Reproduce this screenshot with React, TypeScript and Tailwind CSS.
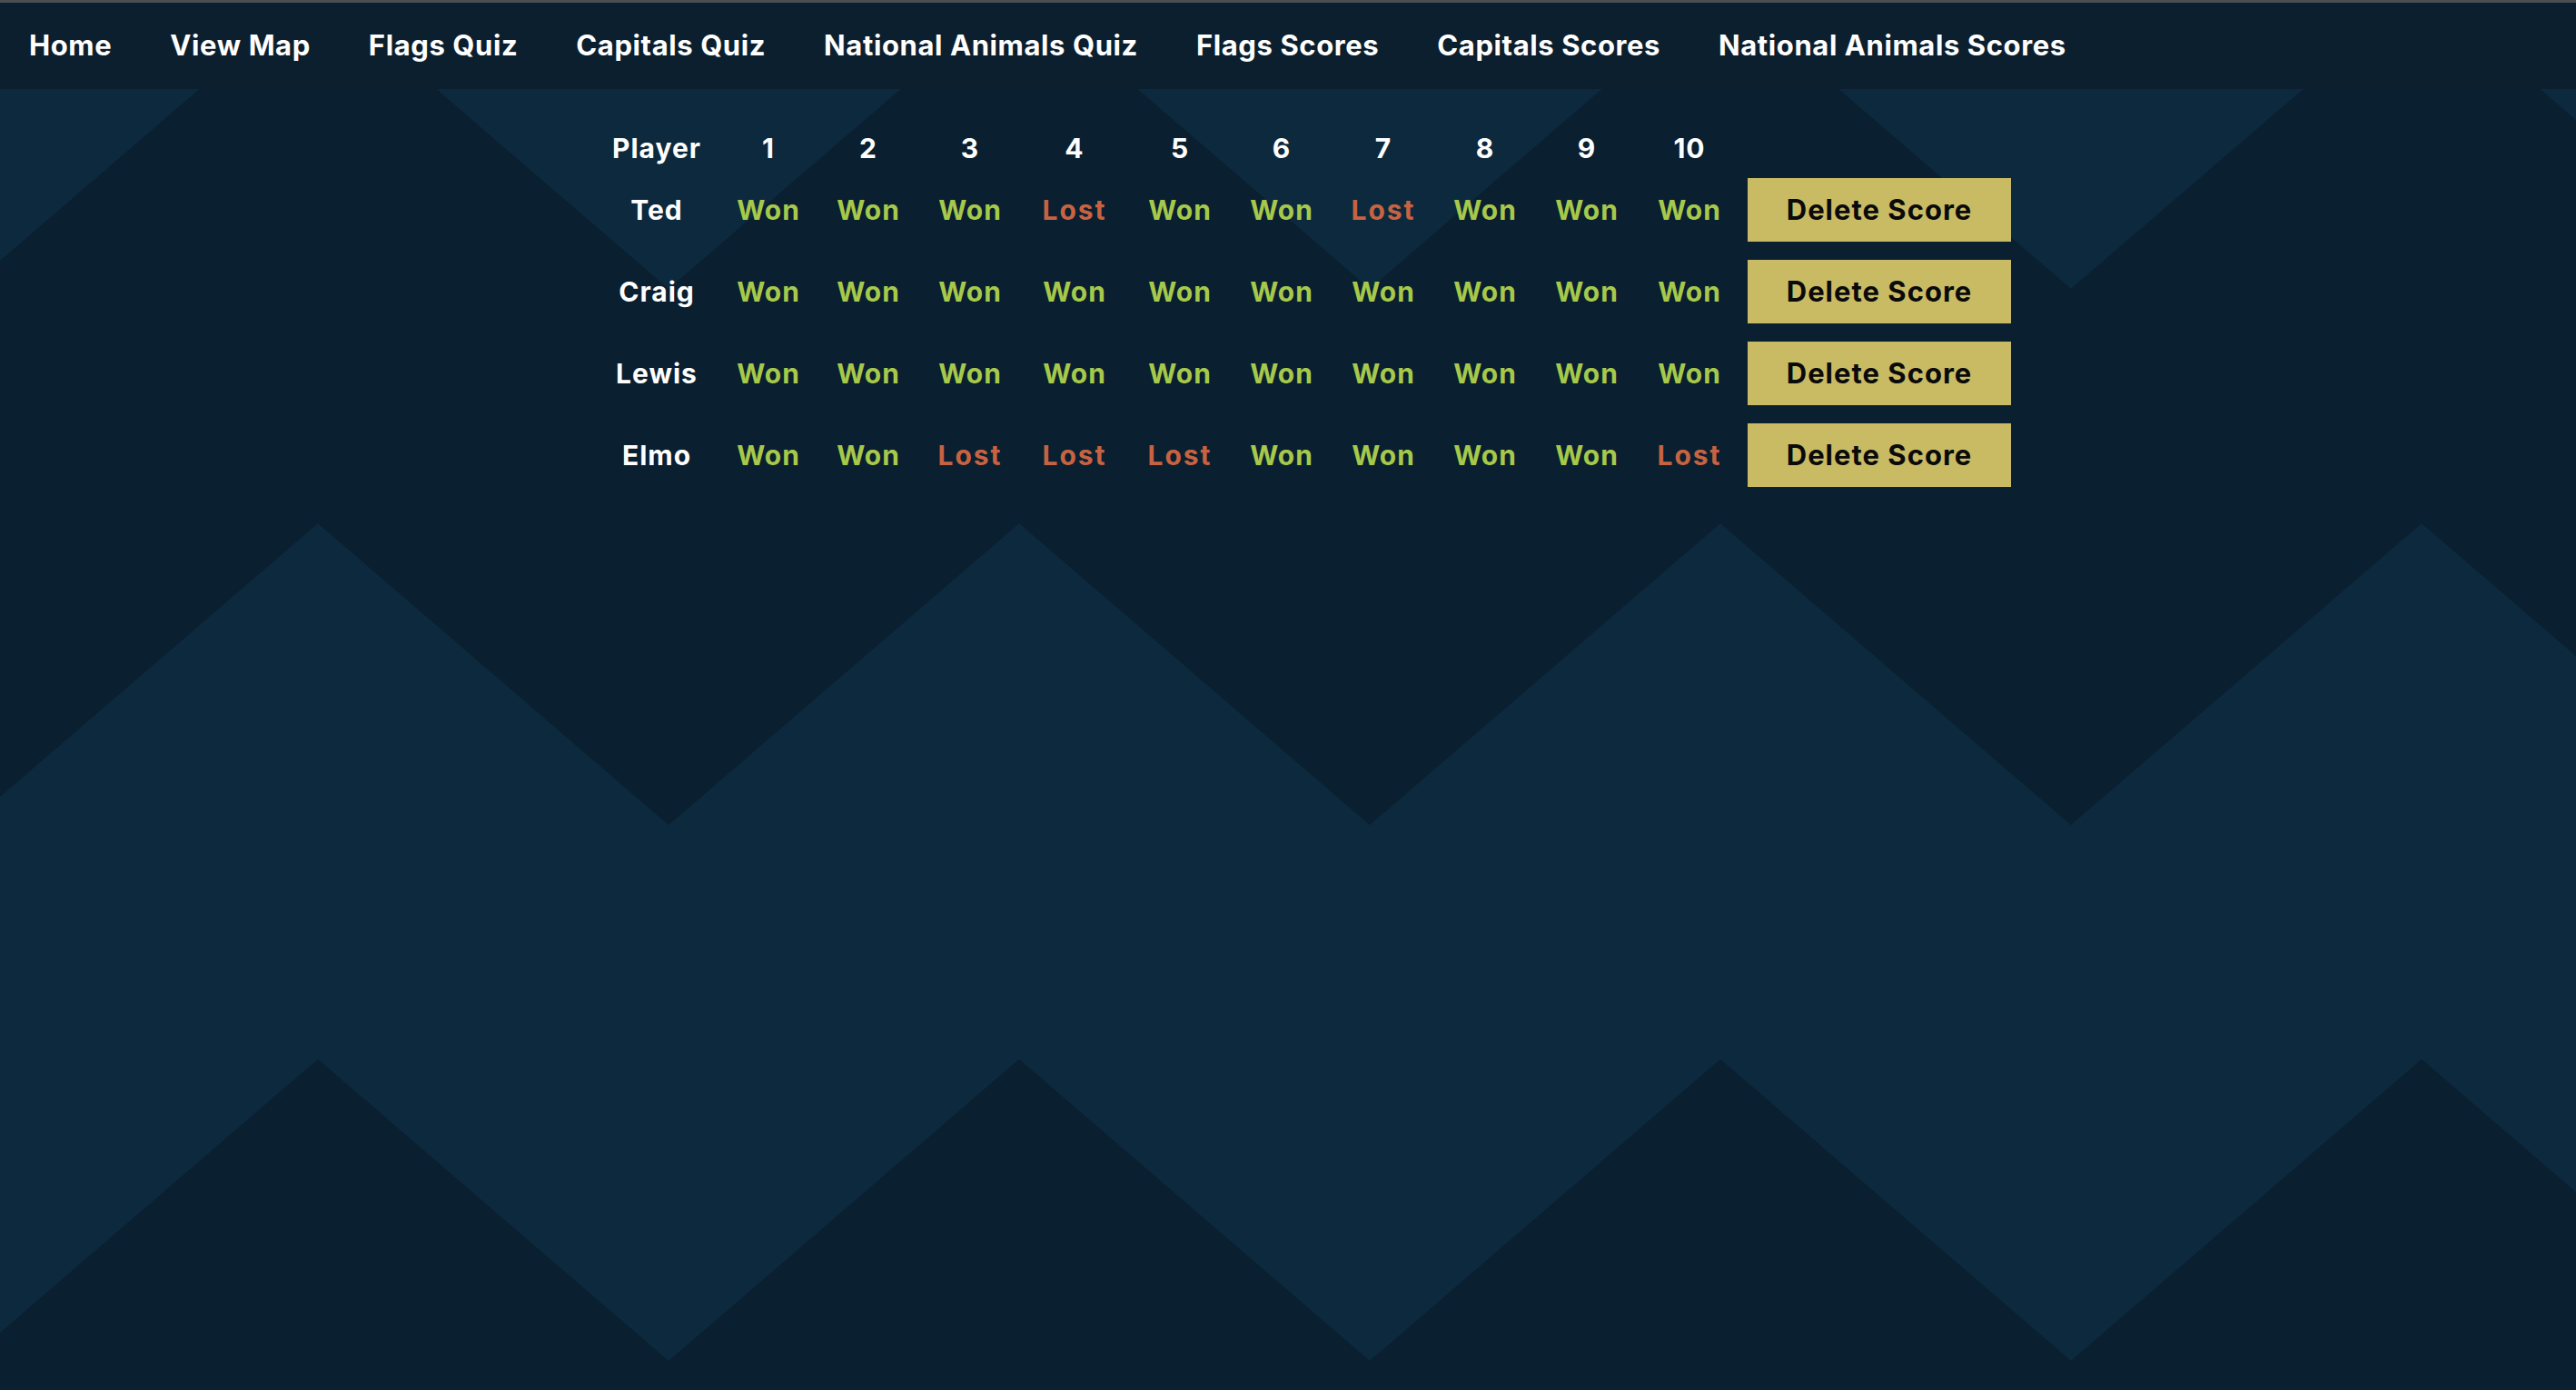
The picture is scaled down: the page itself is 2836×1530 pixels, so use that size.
import React from "react";

const links = ["Home", "View Map", "Flags Quiz", "Capitals Quiz", "National Animals Quiz", "Flags Scores", "Capitals Scores", "National Animals Scores"];

const players: { name: string; results: boolean[] }[] = [
  { name: "Ted",   results: [true, true, true, false, true, true, false, true, true, true] },
  { name: "Craig", results: [true, true, true, true, true, true, true, true, true, true] },
  { name: "Lewis", results: [true, true, true, true, true, true, true, true, true, true] },
  { name: "Elmo",  results: [true, true, false, false, false, true, true, true, true, false] },
];

// zigzag boundary: peaks every 772px starting at x=350, 332px deep
const zig = (peakY: number) => {
  const pts: [number, number][] = [];
  for (let n = -2; n <= 5; n++) {
    pts.push([350 + 772 * n, peakY]);
    pts.push([736 + 772 * n, peakY + 332]);
  }
  return pts;
};
const toStr = (pts: [number, number][]) => pts.map(p => p.join(",")).join(" ");

function Background() {
  const b1 = zig(-14), b2 = zig(576), b3 = zig(1166);
  const top = [...b1, [b1[b1.length - 1][0], -200] as [number, number], [b1[0][0], -200] as [number, number]];
  const mid = [...b2, ...[...b3].reverse()];
  return (
    <svg className="absolute inset-0 w-full h-full" width="2836" height="1530" viewBox="0 0 2836 1530" preserveAspectRatio="xMinYMin slice">
      <rect width="2836" height="1530" fill="#0a1f2f" />
      <polygon points={toStr(top)} fill="#0d293d" />
      <polygon points={toStr(mid)} fill="#0d293d" />
    </svg>
  );
}

export default function App() {
  return (
    <div className="relative h-screen overflow-hidden bg-[#0a1f2f] font-[Inter,sans-serif]">
      <Background />
      <div className="relative">
        <nav className="flex h-[98px] items-center border-t-[3px] border-[#4b4f54] bg-[#0c1f2e]">
          {links.map(l => (
            <a key={l} className="px-8 text-[31px] font-bold tracking-[0.6px] text-white">{l}</a>
          ))}
        </nav>
        <main className="pt-[42px] pl-[655px]">
          <div className="grid grid-cols-[136px_110px_110px_114px_116px_116px_108px_116px_108px_116px_110px_299px] grid-rows-[46px_90px_90px_90px_90px] text-[30px] font-bold tracking-[1px]">
            <div className="flex items-center justify-center text-white">Player</div>
            {Array.from({ length: 10 }, (_, i) => (
              <div key={i} className="flex items-center justify-center text-white">{i + 1}</div>
            ))}
            <div />
            {players.map(p => (
              <React.Fragment key={p.name}>
                <div className="flex items-center justify-center text-white">{p.name}</div>
                {p.results.map((won, i) => (
                  <div key={i} className={`flex items-center justify-center ${won ? "text-[#a6c94b]" : "text-[#c66342] tracking-[2px]"}`}>{won ? "Won" : "Lost"}</div>
                ))}
                <div className="flex items-center pl-[9px]">
                  <button className="h-[70px] w-[290px] bg-[#c9bb64] text-[31px] font-bold tracking-[1px] text-[#0a0a0a]">Delete Score</button>
                </div>
              </React.Fragment>
            ))}
          </div>
        </main>
      </div>
    </div>
  );
}
